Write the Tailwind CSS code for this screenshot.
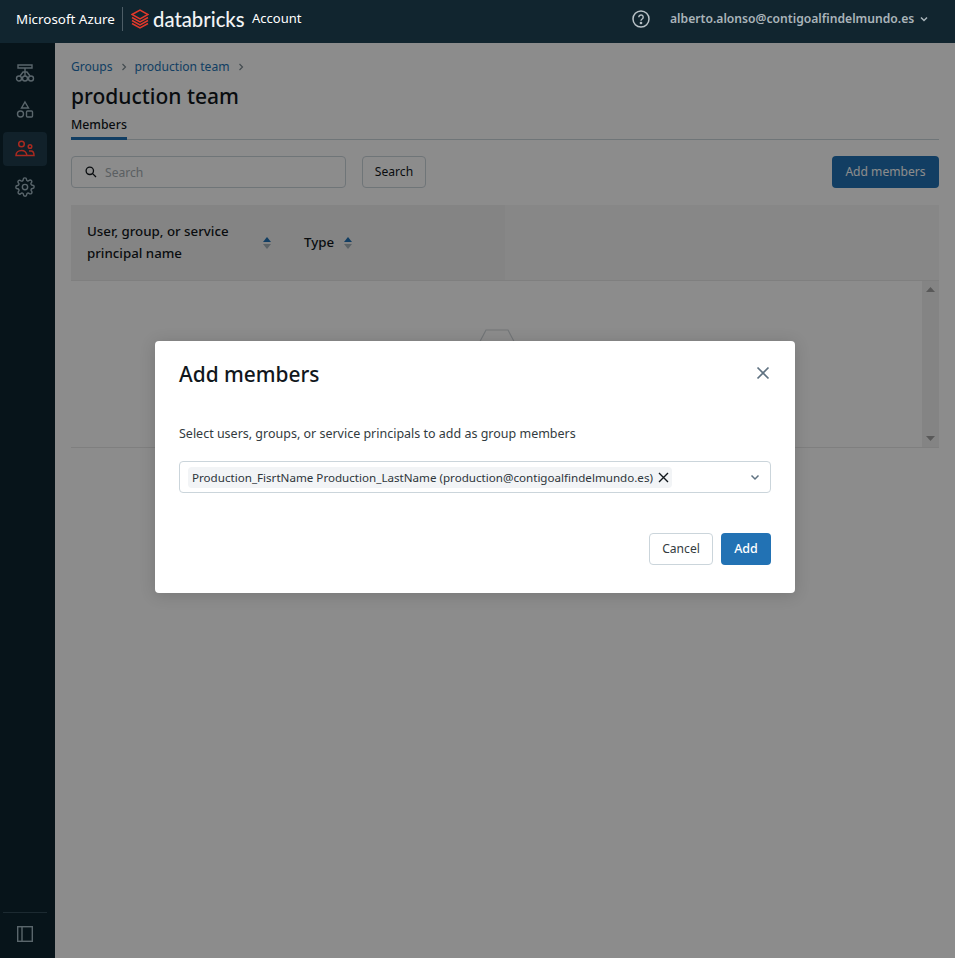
<!DOCTYPE html>
<html lang="en">
<head>
<meta charset="utf-8">
<title>Add members</title>
<script src="https://cdn.jsdelivr.net/npm/@tailwindcss/browser@4"></script>
</head>
<body class="font-['Noto_Sans','Open_Sans',sans-serif] text-[12.100px] bg-white overflow-hidden">
<div class="relative w-[955px] h-[958px] flex flex-col overflow-hidden">
  <header class="h-[43px] shrink-0 bg-[#11252f] flex items-center text-white pl-4 pr-[26px]">
    <span class="text-[13.400px] leading-[38px] -mt-[5px] w-[98px] whitespace-nowrap">Microsoft Azure</span>
    <span class="w-px h-[24px] bg-[#4d5d66] ml-2 -mt-[5px]"></span>
    <svg class="ml-2 -mt-[5px]" width="18" height="20" viewBox="0 0 18 20" fill="none" stroke="#e2392b" stroke-width="1.5"><path d="M1 5.500 9 1l8 4.500-8 4.500zM1 8.500l8 4.500 8-4.500M1 11.500l8 4.500 8-4.500M1 14.500l8 4.500 8-4.500"/></svg>
    <span class="ml-1 -mt-[5px] font-['Lato',sans-serif] font-medium text-[20.300px] leading-[24px] w-[91px] whitespace-nowrap text-[#f2f4f5]">databricks</span>
    <span class="ml-2 -mt-[5px] text-[13px] whitespace-nowrap">Account</span>
    <svg class="ml-auto -mt-[5px]" width="18" height="18" viewBox="0 0 18 18" fill="none" stroke="#b9c2c7" stroke-width="1.5"><circle cx="9" cy="9" r="8"/><path d="M6.800 7.200a2.200 2.200 0 1 1 3.400 1.800c-.8.5-1.200.9-1.200 1.700" stroke-width="1.400"/><circle cx="9" cy="13" r=".6" fill="#b9c2c7"/></svg>
    <span class="ml-[20px] -mt-[5px] font-semibold text-[12.150px] text-[#aab4ba] whitespace-nowrap w-[244px]">alberto.alonso@contigoalfindelmundo.es</span>
    <svg class="ml-[5px] -mt-[5px]" width="10" height="10" viewBox="0 0 10 10" fill="none" stroke="#aab4ba" stroke-width="1.500"><path d="M2 3.500l3 3 3-3"/></svg>
  </header>
  <div class="flex flex-1 min-h-0">
    <aside class="w-[55px] shrink-0 bg-[#07141a] flex flex-col items-start pl-[3px] pt-[13px] pb-[16px]">
      <div class="h-[34px] w-[44px] flex items-center justify-center mb-[3px]">
        <svg width="20" height="20" viewBox="0 0 20 20" fill="none" stroke="#5a666c" stroke-width="1.400"><path d="M3 2h14v3H3zM10 5v4M5 13l3-4h4l3 4M10 9v4"/><circle cx="4" cy="15.500" r="2.500"/><circle cx="10" cy="15.500" r="2.500"/><circle cx="16" cy="15.500" r="2.500"/></svg>
      </div>
      <div class="h-[34px] w-[44px] flex items-center justify-center mb-[5px]">
        <svg width="18" height="20" viewBox="0 0 18 20" fill="none" stroke="#5a666c" stroke-width="1.400"><path d="M9 2l3.500 6h-7z"/><circle cx="4.500" cy="14" r="3"/><rect x="10.500" y="11" width="6" height="6" rx="1"/></svg>
      </div>
      <div class="h-[34px] w-[44px] rounded-[4px] bg-[#11212a] flex items-center justify-center mb-[4px]">
        <svg width="20" height="18" viewBox="0 0 20 18" fill="none" stroke="#a92a20" stroke-width="1.500"><circle cx="6.500" cy="4" r="2.800"/><circle cx="15" cy="6.500" r="1.800"/><path d="M1 15.500c0-3 2.500-5 5.500-5s5 2 5.500 5zM14 11h2c2 0 3 2 3 4.500h-7"/></svg>
      </div>
      <div class="h-[34px] w-[44px] flex items-center justify-center">
        <svg width="20" height="20" viewBox="0 0 24 24" fill="none" stroke="#5a666c" stroke-width="1.700" stroke-linejoin="round"><circle cx="12" cy="12" r="3.200"/><path d="M19.400 15a1.650 1.650 0 0 0 .33 1.820l.06.06a2 2 0 1 1-2.830 2.830l-.06-.06a1.650 1.650 0 0 0-2.800 1.170V21a2 2 0 0 1-4 0v-.09a1.650 1.650 0 0 0-2.900-1.100l-.06.06a2 2 0 1 1-2.830-2.830l.06-.06a1.650 1.650 0 0 0-1.170-2.800H3a2 2 0 0 1 0-4h.09a1.650 1.650 0 0 0 1.100-2.900l-.06-.06a2 2 0 1 1 2.830-2.830l.06.06a1.650 1.650 0 0 0 2.800-1.170V3a2 2 0 0 1 4 0v.09a1.650 1.650 0 0 0 2.900 1.100l.06-.06a2 2 0 1 1 2.830 2.830l-.06.06a1.650 1.650 0 0 0 1.170 2.800H21a2 2 0 0 1 0 4h-.09a1.650 1.650 0 0 0-1.510 1z"/></svg>
      </div>
      <div class="mt-auto w-[44px] border-t border-[#1c2a31] pt-[13px] flex justify-center">
        <svg width="16" height="16" viewBox="0 0 16 16" fill="none" stroke="#5a666c" stroke-width="1.400"><rect x=".7" y=".7" width="14.600" height="14.600"/><path d="M5 1v14"/></svg>
      </div>
    </aside>
    <main class="relative flex-1 min-w-0 bg-white pl-4 pr-4 pt-[14px]">
      <nav class="flex items-center h-[20px] text-[#2272b4] whitespace-nowrap">
        <span>Groups</span>
        <svg class="mx-[7px]" width="8" height="8" viewBox="0 0 8 8" fill="none" stroke="#7c8a92" stroke-width="1.200"><path d="M2.500 1l3 3-3 3"/></svg>
        <span>production team</span>
        <svg class="mx-[7px]" width="8" height="8" viewBox="0 0 8 8" fill="none" stroke="#7c8a92" stroke-width="1.200"><path d="M2.500 1l3 3-3 3"/></svg>
      </nav>
      <h1 class="mt-[3px] text-[21px] leading-[32px] font-medium text-[#11171c]">production team</h1>
      <div class="border-b border-[#cbd5db] h-[26px] mt-[2px]">
        <span class="inline-block h-[26px] border-b-[3px] border-[#2272b4] leading-[22px] font-medium text-[#11171c] text-[12.300px]">Members</span>
      </div>
      <div class="flex mt-[16px] h-[32px]">
        <div class="w-[275px] h-[32px] rounded-[4px] border border-[#cbd5db] flex items-center pl-[13px]">
          <svg width="12" height="12" viewBox="0 0 12 12" fill="none" stroke="#11171c" stroke-width="1.300"><circle cx="4.800" cy="4.800" r="3.700"/><path d="M7.600 7.600 11 11"/></svg>
          <span class="ml-[8px] pt-[2px] text-[#a5adb2]">Search</span>
        </div>
        <div class="ml-4 w-[64px] h-[32px] pt-[1px] rounded-[4px] border border-[#cbd5db] flex items-center justify-center text-[#11171c]">Search</div>
        <div class="ml-auto w-[107px] h-[32px] pt-[1px] rounded-[4px] bg-[#2272b4] text-white flex items-center justify-center">Add members</div>
      </div>
      <div class="mt-[17px] flex h-[76px] bg-[#f6f6f6] border-b border-[#e8e8e8] font-medium text-[#11171c] text-[13.300px]">
        <div class="w-[434px] h-[75px] bg-[#f1f1f1] flex items-center pl-4">
          <span class="w-[172px] pb-[2px] leading-[22px]">User, group, or service principal name</span>
          <svg class="ml-[3px]" width="10" height="14" viewBox="0 0 10 14"><path d="M5 1l4 5H1z" fill="#2272b4"/><path d="M5 13 1 8h8z" fill="#a5b2ba"/></svg>
          <span class="ml-[32px]">Type</span>
          <svg class="ml-[9px]" width="10" height="14" viewBox="0 0 10 14"><path d="M5 1l4 5H1z" fill="#2272b4"/><path d="M5 13 1 8h8z" fill="#a5b2ba"/></svg>
        </div>
      </div>
      <div class="relative flex justify-end h-[167px] border-b border-[#e8e8e8]">
        <svg class="absolute left-[403px] top-[48px]" width="46" height="40" viewBox="0 0 46 40" fill="none" stroke="#d0d6da" stroke-width="1.200"><path d="M2 20 12 1h22l10 19-10 19H12z"/></svg>
        <div class="w-[17px] bg-[#f1f1f1] flex flex-col justify-between items-center py-[6px]">
          <svg width="9" height="5" viewBox="0 0 9 5"><path d="M4.500 0 9 5H0z" fill="#a3a3a3"/></svg>
          <svg width="9" height="5" viewBox="0 0 9 5"><path d="M4.500 5 0 0h9z" fill="#a3a3a3"/></svg>
        </div>
      </div>
      <div class="absolute inset-0 bg-black/45"></div>
    </main>
  </div>
  <section class="absolute left-[155px] top-[341px] w-[640px] h-[252px] bg-white rounded-[4px] shadow-[0_2px_16px_rgba(0,0,0,0.16)] px-6 pt-[16px] text-[#11171c]">
    <div class="flex items-center justify-between h-[34px]">
      <h2 class="text-[20.900px] leading-[34px] font-medium text-[#11171c]">Add members</h2>
      <svg class="mr-[1px] -mt-[2px]" width="14" height="14" viewBox="0 0 14 14" fill="none" stroke="#5f7281" stroke-width="1.700"><path d="M1.500 1.500l11 11M12.500 1.500l-11 11"/></svg>
    </div>
    <p class="mt-[33px] leading-[20px] text-[12.490px] text-[#333b40]">Select users, groups, or service principals to add as group members</p>
    <div class="mt-[17px] h-[32px] rounded-[4px] border border-[#cbd5db] flex items-center pl-[8px] pr-[10px]">
      <span class="h-[21px] pt-[1px] bg-[#f2f4f6] rounded-[4px] pl-[4px] pr-[3px] flex items-center text-[11.620px] whitespace-nowrap text-[#2e363b]">
        Production_FisrtName Production_LastName (production@contigoalfindelmundo.es)
        <svg class="ml-[5px]" width="11" height="11" viewBox="0 0 11 11" fill="none" stroke="#11171c" stroke-width="1.400"><path d="M1 1l9 9M10 1l-9 9"/></svg>
      </span>
      <svg class="ml-auto" width="10" height="10" viewBox="0 0 10 10" fill="none" stroke="#5f7281" stroke-width="1.500"><path d="M1.500 3.500 5 7l3.500-3.500"/></svg>
    </div>
    <div class="flex justify-end gap-2 mt-[40px]">
      <div class="w-[64px] h-[32px] pt-[1px] rounded-[4px] border border-[#cbd5db] flex items-center justify-center text-[#333b40]">Cancel</div>
      <div class="w-[50px] h-[32px] pt-[1px] rounded-[4px] bg-[#2272b4] text-white font-medium text-[12.500px] flex items-center justify-center">Add</div>
    </div>
  </section>
</div>
</body>
</html>
